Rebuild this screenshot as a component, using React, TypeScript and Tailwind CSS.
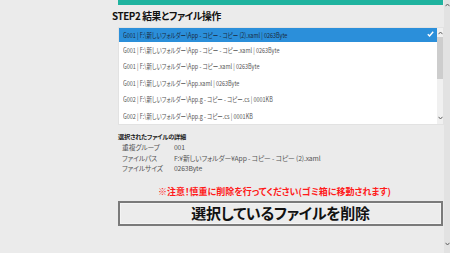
import React from "react";

const F = { fontFamily: '"Noto Sans CJK JP", "Noto Sans", sans-serif', fontFeatureSettings: '"palt"' } as React.CSSProperties;

const rows = [
  "G001 | F:\\新しいフォルダー\\App - コピー - コピー (2).xaml | 0263Byte",
  "G001 | F:\\新しいフォルダー\\App - コピー - コピー.xaml | 0263Byte",
  "G001 | F:\\新しいフォルダー\\App - コピー.xaml | 0263Byte",
  "G001 | F:\\新しいフォルダー\\App.xaml | 0263Byte",
  "G002 | F:\\新しいフォルダー\\App.g - コピー - コピー.cs | 0001KB",
  "G002 | F:\\新しいフォルダー\\App.g - コピー.cs | 0001KB",
];

function Up({ className = "" }: { className?: string }) {
  return (
    <svg width="5" height="4" viewBox="0 0 5 4" className={className}>
      <path d="M0.5 3.2 L2.5 1 L4.5 3.2" fill="none" stroke="#606060" strokeWidth="1" />
    </svg>
  );
}
function Down({ className = "" }: { className?: string }) {
  return (
    <svg width="5" height="4" viewBox="0 0 5 4" className={className}>
      <path d="M0.5 0.8 L2.5 3 L4.5 0.8" fill="none" stroke="#606060" strokeWidth="1" />
    </svg>
  );
}

export default function App() {
  return (
    <div className="w-[450px] h-[253px] bg-[#ebebeb] flex overflow-hidden" style={F}>
      <div className="w-[444px] h-full pl-[118px] pr-[1px] flex flex-col">
        <div className="h-[5px] bg-[#1fb39f]" />
        <div className="mt-[5px] -ml-[6px] text-[9.8px] leading-[13px] font-bold tracking-[-0.4px] text-[#111]">STEP2 結果とファイル操作</div>
        <div className="mt-[4px] -mr-[1px] h-[98px] bg-white border border-[#e2e2e2] flex overflow-hidden">
          <div className="flex-1 overflow-hidden">
            {rows.map((r, i) => (
              <div
                key={i}
                className={`relative flex items-center pl-[4px] text-[7px] whitespace-nowrap ${i === 0 ? "h-[13.5px] bg-[#2b8fda] text-[#1a2a3a]" : "h-[16.5px] text-[#555]"}`}
              >
                <span className="inline-block origin-left scale-x-[0.78]">{r}</span>
                {i === 0 && (
                  <svg width="7" height="6" viewBox="0 0 7 6" className="absolute right-[3px] top-[3px]">
                    <path d="M0.8 3.2 L2.6 5 L6.2 0.8" fill="none" stroke="#fff" strokeWidth="1.4" />
                  </svg>
                )}
              </div>
            ))}
          </div>
          <div className="w-[6px] bg-[#f0f0f0] flex flex-col items-center">
            <Up className="mt-[3px]" />
            <div className="mt-[2px] w-[6px] h-[42px] bg-[#cdcdcd]" />
            <div className="flex-1" />
            <Down className="mb-[4px]" />
          </div>
        </div>
        <div className="mt-[7px] text-[6.2px] leading-[10px] font-bold tracking-[-0.2px] text-[#222]">選択されたファイルの詳細</div>
        <div className="pl-[4px] text-[6.8px] leading-[10.5px] tracking-[-0.15px] text-[#555]">
          <div className="flex"><span className="w-[52px]">重複グループ</span><span>001</span></div>
          <div className="flex"><span className="w-[52px]">ファイルパス</span><span>F:¥新しいフォルダー¥App - コピー - コピー (2).xaml</span></div>
          <div className="flex"><span className="w-[52px]">ファイルサイズ</span><span>0263Byte</span></div>
        </div>
        <div className="mt-[12px] text-center text-[9px] leading-[12px] font-bold text-[#ff1a1a] pr-[12px]">
          ※注意！慎重に削除を行ってください(ゴミ箱に移動されます)
        </div>
        <div className="mt-[3px] h-[25px] border-2 border-[#7a7a7a] bg-[#ececec] flex items-center justify-center text-[15px] tracking-[-0.3px] font-bold text-[#111] shadow-[inset_0_0_0_1px_#f4f4f4]">
          選択しているファイルを削除
        </div>
      </div>
      <div className="w-[6px] h-full bg-[#e2e2e2] flex flex-col items-center">
        <Up className="mt-[3px]" />
        <div className="flex-1" />
        <Down className="mb-[7px]" />
      </div>
    </div>
  );
}
